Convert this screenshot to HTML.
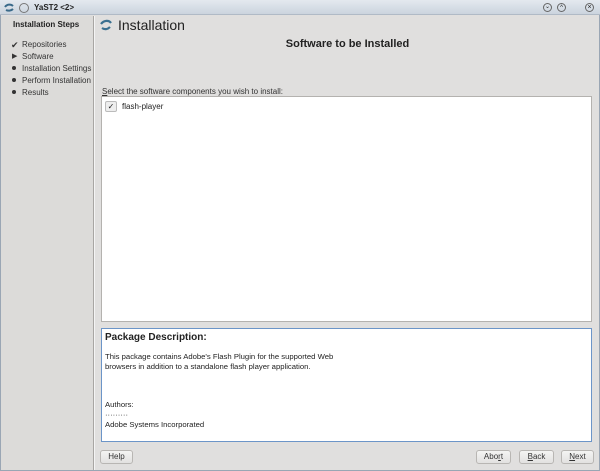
<!DOCTYPE html>
<html><head><style>
*{margin:0;padding:0;box-sizing:border-box}
body{width:600px;height:471px;overflow:hidden;background:#e0dfde;font-family:"Liberation Sans",sans-serif;font-size:8px;color:#222;position:relative}
.abs{position:absolute}
.title{left:0;top:0;width:600px;height:15px;background:linear-gradient(#e4e9ef,#cbd4de);border-bottom:1px solid #b0bac6}
.frame{left:0;top:15px;width:600px;height:456px;border:1px solid #9aa6b4;border-top:none}
.btn{position:absolute;top:450px;height:14px;border:1px solid #b8b6b3;border-radius:3px;background:linear-gradient(#f4f4f3,#e2e1e0);font-size:8px;text-align:center;line-height:12px;color:#333}
.step{position:absolute;left:22px;font-size:8px;color:#333}
.dot{position:absolute;left:12px;width:4px;height:4px;border-radius:2px;background:#333}
</style></head><body>
<div class="abs title"></div>
<div class="abs frame"></div>
<svg class="abs" style="left:3px;top:2px" width="12" height="12" viewBox="0 0 12 12"><path d="M2 5c2-3 6-3 8-1M3 8c2 1 5 1 7-1" stroke="#3a6a8a" stroke-width="2" fill="none"/></svg>
<div class="abs" style="left:19px;top:3px;width:10px;height:10px;border:1px solid #777;border-radius:5px"></div>
<div class="abs" style="left:34px;top:3px;font-size:8px;font-weight:bold;color:#222">YaST2 &lt;2&gt;</div>
<div class="abs" style="left:543px;top:3px;width:9px;height:9px;border:1px solid #666;border-radius:5px;font-size:6px;line-height:7px;text-align:center">⌄</div>
<div class="abs" style="left:557px;top:3px;width:9px;height:9px;border:1px solid #666;border-radius:5px;font-size:6px;line-height:9px;text-align:center">^</div>
<div class="abs" style="left:585px;top:3px;width:9px;height:9px;border:1px solid #666;border-radius:5px;font-size:7px;line-height:7px;text-align:center">×</div>
<div class="abs" style="left:1px;top:16px;width:92px;height:454px;background:#dcdbd9"></div>
<div class="abs" style="left:93px;top:16px;width:2px;height:454px;background:#a8a6a3;border-right:1px solid #f4f4f4"></div>
<div class="abs" style="left:13px;top:20px;font-size:8px;font-weight:bold">Installation Steps</div>
<div class="abs" style="left:11px;top:40px;font-size:9px;color:#333">✔</div><div class="step" style="top:40px">Repositories</div>
<div class="abs" style="left:12px;top:52px;font-size:7px;color:#333">▶</div><div class="step" style="top:52px">Software</div>
<div class="dot" style="top:66px"></div><div class="step" style="top:64px">Installation Settings</div>
<div class="dot" style="top:78px"></div><div class="step" style="top:76px">Perform Installation</div>
<div class="dot" style="top:90px"></div><div class="step" style="top:88px">Results</div>
<svg class="abs" style="left:99px;top:18px" width="14" height="14" viewBox="0 0 14 14"><path d="M2 6c3-4 8-4 10-1M3 10c3 2 6 1 8-1" stroke="#3a7090" stroke-width="2.2" fill="none"/></svg>
<div class="abs" style="left:118px;top:17px;font-size:14px;color:#222">Installation</div>
<div class="abs" style="left:95px;top:38px;width:505px;text-align:center;font-size:11px;font-weight:bold">Software to be Installed</div>
<div class="abs" style="left:102px;top:87px;font-size:8px;color:#333"><u>S</u>elect the software components you wish to install:</div>
<div class="abs" style="left:101px;top:96px;width:491px;height:226px;background:#fff;border:1px solid #b4b2af"></div>
<div class="abs" style="left:105px;top:101px;width:12px;height:11px;border:1px solid #bbb;border-radius:2px;background:#eee;font-size:8px;line-height:10px;text-align:center">✓</div>
<div class="abs" style="left:122px;top:102px;font-size:8px">flash-player</div>
<div class="abs" style="left:101px;top:328px;width:491px;height:114px;background:#fff;border:1px solid #6c95c8"></div>
<div class="abs" style="left:105px;top:332px;font-size:10px;font-weight:bold">Package Description:</div>
<div class="abs" style="left:105px;top:352px;font-size:7.7px;line-height:10px">This package contains Adobe's Flash Plugin for the supported Web<br>browsers in addition to a standalone flash player application.</div>
<div class="abs" style="left:105px;top:400px;font-size:7.7px;line-height:10px">Authors:<br>·········<br>Adobe Systems Incorporated</div>
<div class="btn" style="left:100px;width:33px">Help</div>
<div class="btn" style="left:476px;width:35px">Abo<u>r</u>t</div>
<div class="btn" style="left:519px;width:35px"><u>B</u>ack</div>
<div class="btn" style="left:561px;width:33px"><u>N</u>ext</div>
</body></html>
